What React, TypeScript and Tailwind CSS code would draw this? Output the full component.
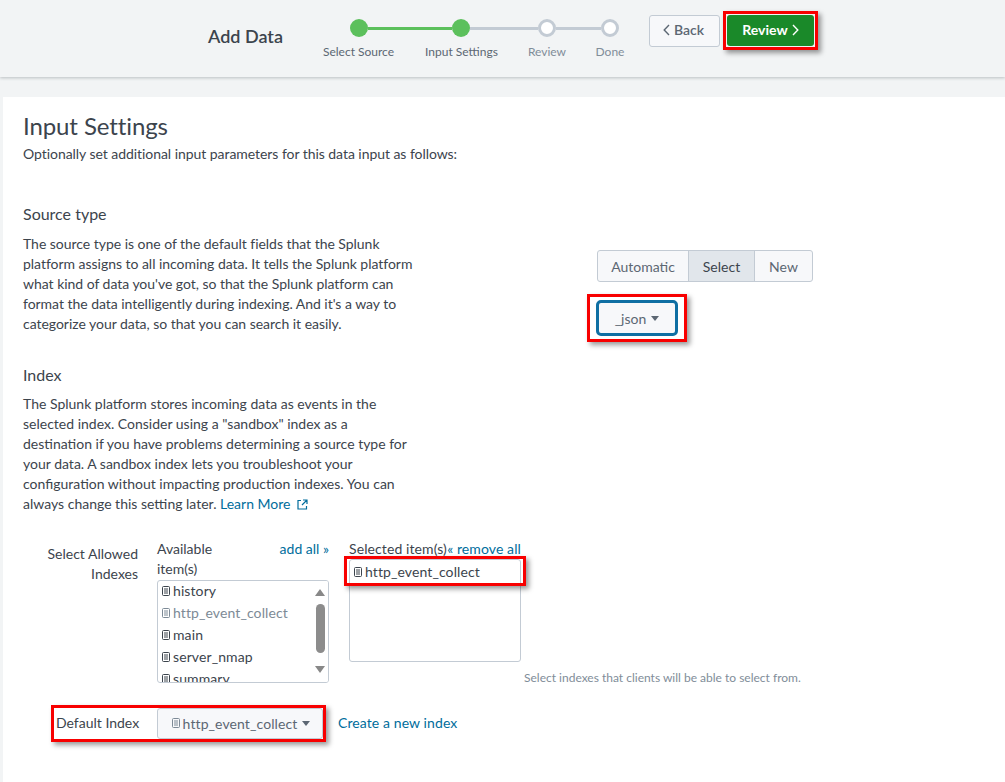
import type { ReactNode } from "react";

const STEPS = [
  { label: "Select Source", width: "w-[101px]", color: "text-[#5c6773]" },
  { label: "Input Settings", width: "w-[105px]", color: "text-[#5c6773]" },
  { label: "Review", width: "w-[66px]", color: "text-[#818d99]" },
  { label: "Done", width: "w-[60px]", color: "text-[#818d99]" },
];

const INDEXES = [
  { name: "history", muted: false },
  { name: "http_event_collect", muted: true },
  { name: "main", muted: false },
  { name: "server_nmap", muted: false },
  { name: "summary", muted: false },
];

function DbIcon({ muted = false }: { muted?: boolean }) {
  return (
    <svg
      width="8"
      height="10"
      viewBox="0 0 8 10"
      className={`mr-[3px] shrink-0 ${muted ? "text-[#7d8a96]" : "text-[#3c444d]"}`}
    >
      <rect x="0.5" y="0.5" width="7" height="9" rx="1" fill="none" stroke="currentColor" />
      <path d="M2 3h4M2 5h4M2 7h4" stroke="currentColor" strokeWidth="1" />
    </svg>
  );
}

function Caret() {
  return (
    <svg width="8" height="5" viewBox="0 0 8 5" className="ml-[5px] shrink-0 text-[#5c6773]">
      <path d="M0 0h8L4 5z" fill="currentColor" />
    </svg>
  );
}

function Chevron({ dir, className }: { dir: "left" | "right"; className: string }) {
  return (
    <svg width="7" height="12" viewBox="0 0 7 12" className={className}>
      <path
        d={dir === "left" ? "M6 1 1.2 6 6 11" : "M1 1l4.8 5L1 11"}
        fill="none"
        stroke="currentColor"
        strokeWidth="1.4"
      />
    </svg>
  );
}

function RedBox({ className, children }: { className: string; children: ReactNode }) {
  return (
    <div className={`border-[3px] border-[#f80000] shadow-[3px_3px_5px_rgba(0,0,0,0.4)] ${className}`}>
      {children}
    </div>
  );
}

function Stepper() {
  return (
    <div className="flex w-[332px] flex-col">
      <div className="ml-[42px] flex h-[18px] items-center">
        <span className="h-[18px] w-[18px] rounded-full bg-[#5cc05c]" />
        <span className="h-[3px] w-[84px] bg-[#5cc05c]" />
        <span className="h-[18px] w-[18px] rounded-full bg-[#5cc05c]" />
        <span className="h-[3px] w-[68px] bg-[#c3cbd4]" />
        <span className="h-[18px] w-[18px] rounded-full border-[3px] border-[#c3cbd4] bg-white" />
        <span className="h-[3px] w-[45px] bg-[#c3cbd4]" />
        <span className="h-[18px] w-[18px] rounded-full border-[3px] border-[#c3cbd4] bg-white" />
      </div>
      <div className="mt-[7px] flex">
        {STEPS.map((s) => (
          <span key={s.label} className={`${s.width} text-center text-[12px] leading-[16px] ${s.color}`}>
            {s.label}
          </span>
        ))}
      </div>
    </div>
  );
}

function ListBox() {
  return (
    <div className="relative h-[103px] w-[172px] overflow-hidden rounded-[3px] border border-[#c3cbd4] pl-[4px]">
      <div className="-mt-px">
        {INDEXES.map((item) => (
          <div
            key={item.name}
            className={`flex h-[22px] items-center text-[14px] tracking-[0.1px] ${item.muted ? "text-[#7d8a96]" : "text-[#3c444d]"}`}
          >
            <DbIcon muted={item.muted} />
            {item.name}
          </div>
        ))}
      </div>
      {/* fake scrollbar */}
      <div className="absolute top-0 right-0 flex h-full w-[16px] flex-col items-center bg-white pt-[8px]">
        <span className="h-0 w-0 border-x-[5px] border-b-[7px] border-x-transparent border-b-[#888888]" />
        <span className="mt-[8px] h-[49px] w-[9px] shrink-0 rounded-[5px] bg-[#8c8c8c]" />
        <span className="mt-[13px] h-0 w-0 border-x-[5px] border-t-[7px] border-x-transparent border-t-[#888888]" />
      </div>
    </div>
  );
}

export default function App() {
  return (
    <div className="h-[782px] w-[1005px] overflow-hidden bg-[#f2f4f5] font-['Lato','Liberation_Sans',sans-serif] text-[#3c444d]">
      <header className="flex h-[77px] items-start bg-[#f2f4f5] shadow-[0_1px_3px_rgba(60,68,77,0.3)]">
        <h1 className="mt-[25px] ml-[208px] w-[100px] text-[18px] leading-[22px] font-semibold">Add Data</h1>
        <div className="mt-[19px]">
          <Stepper />
        </div>
        <div className="mt-[11px] ml-[9px] flex items-center">
          <button className="flex h-[32px] w-[71px] items-center justify-center rounded-[3px] border border-[#c3cbd4] bg-[#f7f8fa] pr-[2px] pb-[2px] text-[14px] font-semibold text-[#5c6773]">
            <Chevron dir="left" className="mr-[4px]" />
            Back
          </button>
          <RedBox className="ml-[3px] p-px">
            <button className="flex h-[31px] w-[87px] items-center justify-center rounded-[3px] bg-[#1a8929] pb-[2px] text-[14px] font-bold text-white">
              Review
              <Chevron dir="right" className="ml-[4px]" />
            </button>
          </RedBox>
        </div>
      </header>

      <main className="mt-[20px] ml-[3px] h-[685px] bg-white pt-[16px] pl-[20px]">
        <h2 className="text-[24px] leading-[26px] tracking-[-0.1px] text-[#3c444d]">Input Settings</h2>
        <p className="mt-[5px] text-[14px] leading-[20px] tracking-[-0.05px]">
          Optionally set additional input parameters for this data input as follows:
        </p>

        <h3 className="mt-[40px] text-[16px] leading-[20px]">Source type</h3>
        <div className="flex">
          <p className="mt-[10px] w-[400px] text-[14px] leading-[20px] tracking-[-0.03px]">
            The source type is one of the default fields that the Splunk
            <br />
            platform assigns to all incoming data. It tells the Splunk platform
            <br />
            what kind of data you've got, so that the Splunk platform can
            <br />
            format the data intelligently during indexing. And it's a way to
            <br />
            categorize your data, so that you can search it easily.
          </p>
          <div className="mt-[26px] ml-[164px] flex flex-col items-start">
            <div className="ml-[10px] flex h-[32px] overflow-hidden rounded-[3px] border border-[#c3cbd4] bg-[#f7f8fa] text-[14px] text-[#5c6773]">
              <span className="flex w-[91px] items-center justify-center border-r border-[#c3cbd4]">Automatic</span>
              <span className="flex w-[66px] items-center justify-center border-r border-[#c3cbd4] bg-[#e1e6eb] text-[#3c444d]">
                Select
              </span>
              <span className="flex w-[57px] items-center justify-center">New</span>
            </div>
            <RedBox className="mt-[12px] px-[6px] pt-[3px] pb-[3px]">
              <div className="flex h-[36px] w-[82px] items-center justify-center rounded-[5px] border-[3px] border-[#0f6fa3] bg-[#f7f8fa] text-[14px] text-[#5c6773]">
                _json
                <Caret />
              </div>
            </RedBox>
          </div>
        </div>

        <h3 className="mt-[23px] text-[16px] leading-[20px]">Index</h3>
        <p className="mt-[9px] w-[400px] text-[14px] leading-[20px]">
          The Splunk platform stores incoming data as events in the
          <br />
          selected index. Consider using a "sandbox" index as a
          <br />
          destination if you have problems determining a source type for
          <br />
          your data. A sandbox index lets you troubleshoot your
          <br />
          configuration without impacting production indexes. You can
          <br />
          always change this setting later.{" "}
          <a className="text-[#006d9c]">
            Learn More
            <svg width="11" height="11" viewBox="0 0 11 11" className="ml-[6px] inline-block align-[-1px]">
              <path d="M4 1.5H1v8.5h8.5V7M6 1h4v4M10 1 5 6" fill="none" stroke="currentColor" strokeWidth="1.2" />
            </svg>
          </a>
        </p>

        <div className="mt-[25px] flex text-[14px] leading-[20px]">
          <div className="mt-[5px] w-[115px] text-right">
            Select Allowed
            <br />
            Indexes
          </div>
          <div className="ml-[19px] w-[172px]">
            <div className="flex h-[41px] items-start justify-between">
              <span className="w-[80px]">Available item(s)</span>
              <a className="text-[#006d9c]">add all »</a>
            </div>
            <ListBox />
          </div>
          <div className="ml-[20px] flex w-[172px] flex-col">
            <div className="flex justify-between tracking-[0.1px]">
              <span>Selected item(s)</span>
              <a className="whitespace-nowrap text-[#006d9c]">« remove all</a>
            </div>
            <div className="relative h-[103px] rounded-[3px] border border-[#c3cbd4]">
              <RedBox className="absolute -top-[4px] -left-[6px] flex h-[30px] w-[182px] items-center pt-px pl-[7px] text-[14px] tracking-[0.1px]">
                <DbIcon />
                http_event_collect
              </RedBox>
            </div>
          </div>
          <span className="mt-[131px] ml-[3px] text-[12px] leading-[16px] whitespace-nowrap text-[#818d99]">
            Select indexes that clients will be able to select from.
          </span>
        </div>

        <div className="mt-[19px] flex items-center text-[14px]">
          <RedBox className="ml-[28px] flex h-[37px] w-[275px] items-center pl-[2px]">
            <span className="w-[101px] pb-[3px]">Default Index</span>
            <div className="flex h-[31px] w-[166px] items-center justify-center rounded-[3px] border border-[#c3cbd4] bg-[#f7f8fa] pb-px pl-[2px] tracking-[0.1px] text-[#5c6773]">
              <DbIcon muted />
              http_event_collect
              <Caret />
            </div>
          </RedBox>
          <a className="ml-[12px] pb-[3px] tracking-[0.1px] text-[#006d9c]">Create a new index</a>
        </div>
      </main>
    </div>
  );
}
